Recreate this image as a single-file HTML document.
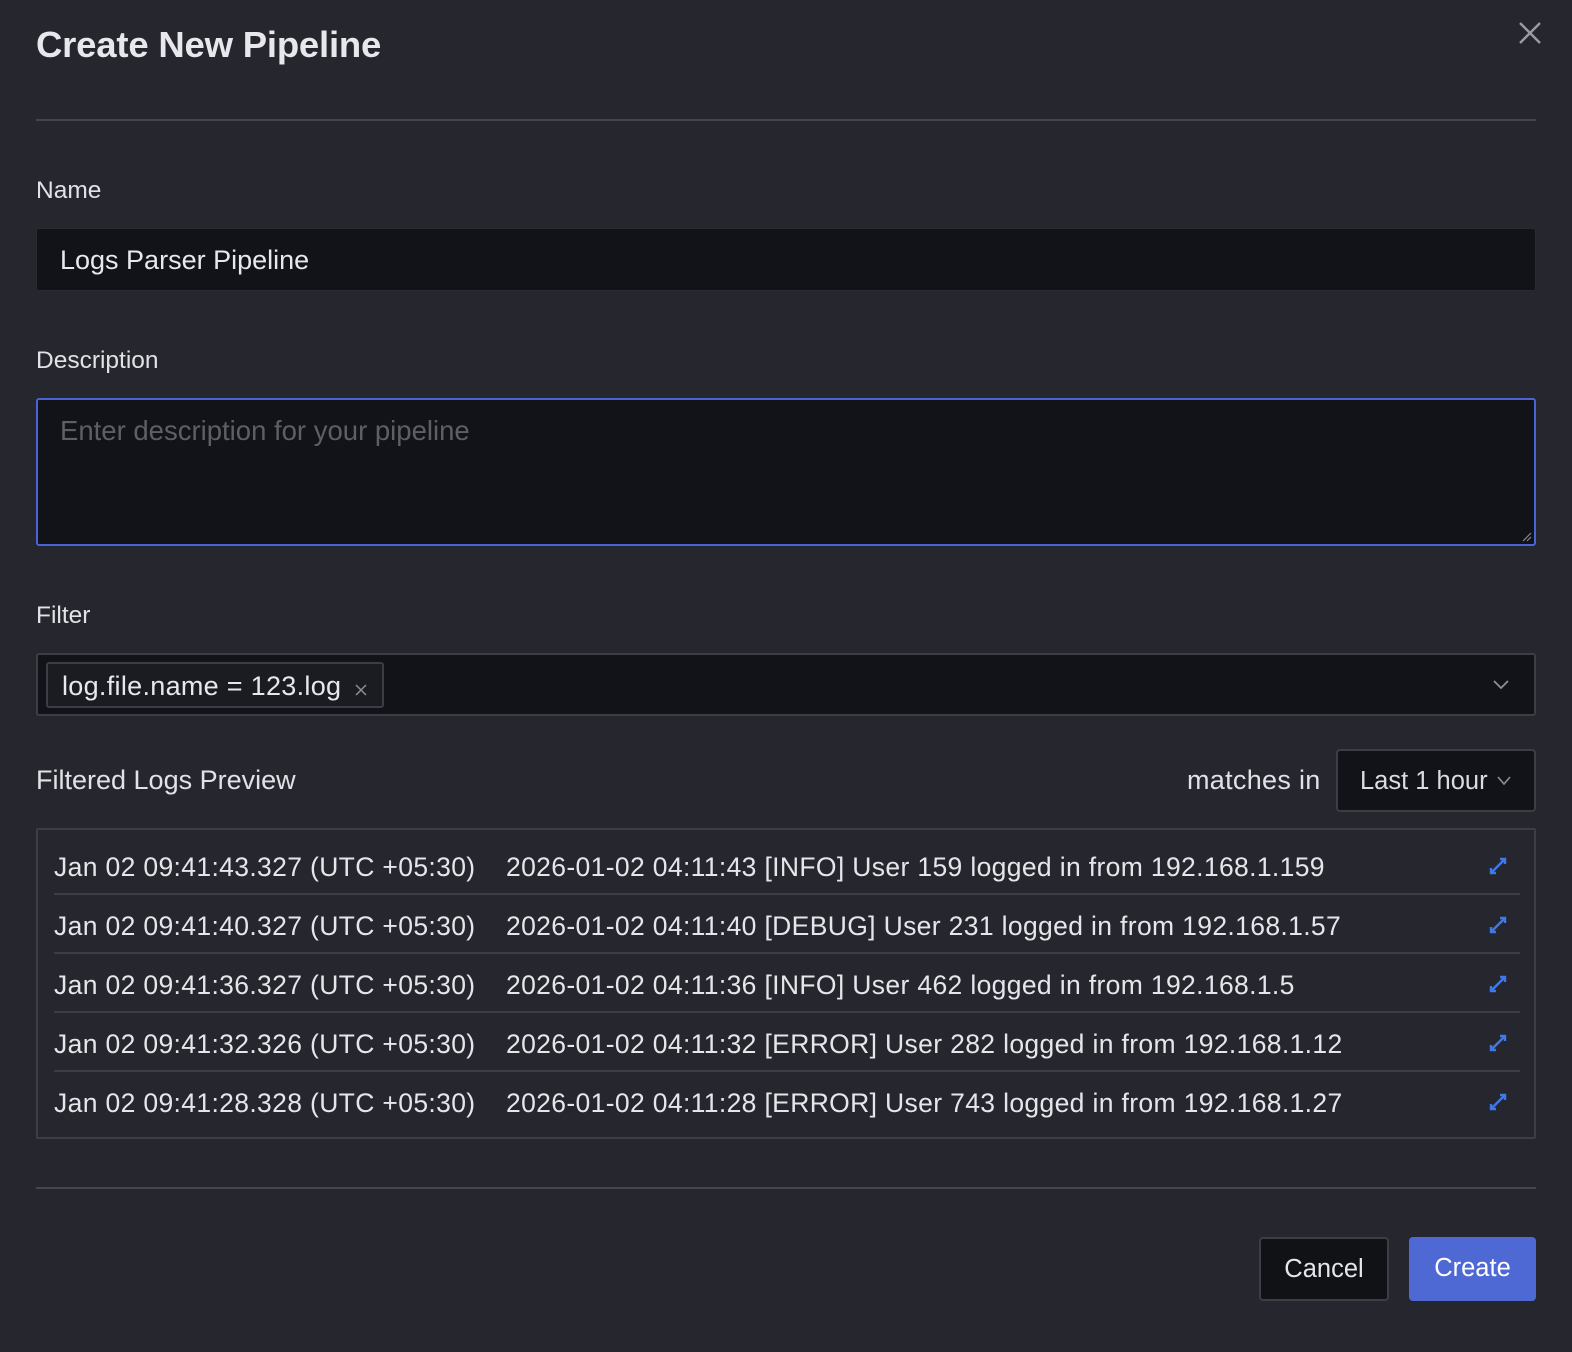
<!DOCTYPE html>
<html><head><meta charset="utf-8"><style>
*{box-sizing:border-box;margin:0;padding:0}
body{width:1572px;height:1352px;background:#25262e;font-family:"Liberation Sans",sans-serif;color:#e6e6ea;position:relative;overflow:hidden}
.abs{position:absolute}
h1{position:absolute;left:36px;top:24px;font-size:36.5px;font-weight:bold;color:#e8e8ec;letter-spacing:-0.2px}
.hr{position:absolute;left:36px;width:1500px;height:2px;background:#45464e}
.lbl{position:absolute;left:36px;font-size:24.5px;color:#e2e2e6}
.inp{position:absolute;left:36px;width:1500px;background:#121318;border:1px solid #2a2b31;border-radius:3px}
.log{position:absolute;left:36px;top:828px;width:1500px;height:311px;border:2px solid #3d3e45;border-radius:2px;background:#25262e}
.row{position:absolute;left:16px;width:1466px;height:59px;font-size:26.5px;letter-spacing:0.35px;color:#e6e6ea;line-height:62px;white-space:nowrap}
.row .ts{display:inline-block;width:452px}
.row.b{border-bottom:2px solid #3d3e45}
.row svg{position:absolute;right:12px;top:20px}
</style></head><body>
<h1>Create New Pipeline</h1>
<svg class="abs" style="left:1518px;top:21px" width="24" height="24" viewBox="0 0 24 24"><path d="M2 2L22 22M22 2L2 22" stroke="#9a9ba2" stroke-width="2.4"/></svg>
<div class="hr" style="top:119px"></div>
<div class="lbl" style="top:177px">Name</div>
<div class="inp" style="top:228px;height:63px"><span class="abs" style="left:23px;top:16px;font-size:27px;color:#e8e8ec">Logs Parser Pipeline</span></div>
<div class="lbl" style="top:347px">Description</div>
<div class="inp" style="top:398px;height:148px;border:2px solid #4a64d6"><span class="abs" style="left:22px;top:15px;font-size:27.5px;color:#5e5f66">Enter description for your pipeline</span>
<svg class="abs" style="right:2px;bottom:2px" width="12" height="12"><path d="M11 3L3 11M11 7L7 11" stroke="#888" stroke-width="1.2"/></svg></div>
<div class="lbl" style="top:602px">Filter</div>
<div class="inp" style="top:653px;height:63px;border:2px solid #3d3e45">
<div class="abs" style="left:8px;top:7px;width:338px;height:46px;border:2px solid #3d3e45;border-radius:3px;background:#1b1c21">
<span class="abs" style="left:14px;top:7px;font-size:27px;color:#e8e8ec;letter-spacing:0.3px">log.file.name = 123.log</span>
<svg class="abs" style="left:306px;top:19px" width="14" height="14"><path d="M2 2L12 12M12 2L2 12" stroke="#8e8f96" stroke-width="1.5"/></svg></div>
<svg class="abs" style="right:24px;top:24px" width="18" height="12"><path d="M2 2L9 9L16 2" stroke="#8e8f96" stroke-width="1.8" fill="none"/></svg></div>
<div class="lbl" style="top:765px;font-size:27px">Filtered Logs Preview</div>
<div class="abs" style="left:1187px;top:765px;font-size:27px;color:#e2e2e6;letter-spacing:0.3px">matches in</div>
<div class="abs" style="left:1336px;top:749px;width:200px;height:63px;background:#121318;border:2px solid #3d3e45;border-radius:4px">
<span class="abs" style="left:22px;top:16px;font-size:25.5px;color:#dcdce0">Last 1 hour</span>
<svg class="abs" style="left:158px;top:24px" width="16" height="12"><path d="M2 2L8 9L14 2" stroke="#8e8f96" stroke-width="1.6" fill="none"/></svg></div>
<div class="log">
<div class="row b" style="top:6px"><span class="ts">Jan 02 09:41:43.327 (UTC +05:30)</span>2026-01-02 04:11:43 [INFO] User 159 logged in from 192.168.1.159<svg width="20" height="20" viewBox="0 0 20 20"><path d="M3 17L17 3M12 3H17V8M3 12V17H8" stroke="#3f78e8" stroke-width="2.4" fill="none"/></svg></div>
<div class="row b" style="top:65px"><span class="ts">Jan 02 09:41:40.327 (UTC +05:30)</span>2026-01-02 04:11:40 [DEBUG] User 231 logged in from 192.168.1.57<svg width="20" height="20" viewBox="0 0 20 20"><path d="M3 17L17 3M12 3H17V8M3 12V17H8" stroke="#3f78e8" stroke-width="2.4" fill="none"/></svg></div>
<div class="row b" style="top:124px"><span class="ts">Jan 02 09:41:36.327 (UTC +05:30)</span>2026-01-02 04:11:36 [INFO] User 462 logged in from 192.168.1.5<svg width="20" height="20" viewBox="0 0 20 20"><path d="M3 17L17 3M12 3H17V8M3 12V17H8" stroke="#3f78e8" stroke-width="2.4" fill="none"/></svg></div>
<div class="row b" style="top:183px"><span class="ts">Jan 02 09:41:32.326 (UTC +05:30)</span>2026-01-02 04:11:32 [ERROR] User 282 logged in from 192.168.1.12<svg width="20" height="20" viewBox="0 0 20 20"><path d="M3 17L17 3M12 3H17V8M3 12V17H8" stroke="#3f78e8" stroke-width="2.4" fill="none"/></svg></div>
<div class="row" style="top:242px"><span class="ts">Jan 02 09:41:28.328 (UTC +05:30)</span>2026-01-02 04:11:28 [ERROR] User 743 logged in from 192.168.1.27<svg width="20" height="20" viewBox="0 0 20 20"><path d="M3 17L17 3M12 3H17V8M3 12V17H8" stroke="#3f78e8" stroke-width="2.4" fill="none"/></svg></div>
</div>
<div class="hr" style="top:1187px"></div>
<div class="abs" style="left:1259px;top:1237px;width:130px;height:64px;background:#111216;border:2px solid #3d3e45;border-radius:4px;font-size:25.5px;color:#e6e6ea;text-align:center;line-height:60px">Cancel</div>
<div class="abs" style="left:1409px;top:1237px;width:127px;height:64px;background:#4e69d4;border-radius:4px;font-size:25.5px;color:#fff;text-align:center;line-height:62px">Create</div>
</body></html>
